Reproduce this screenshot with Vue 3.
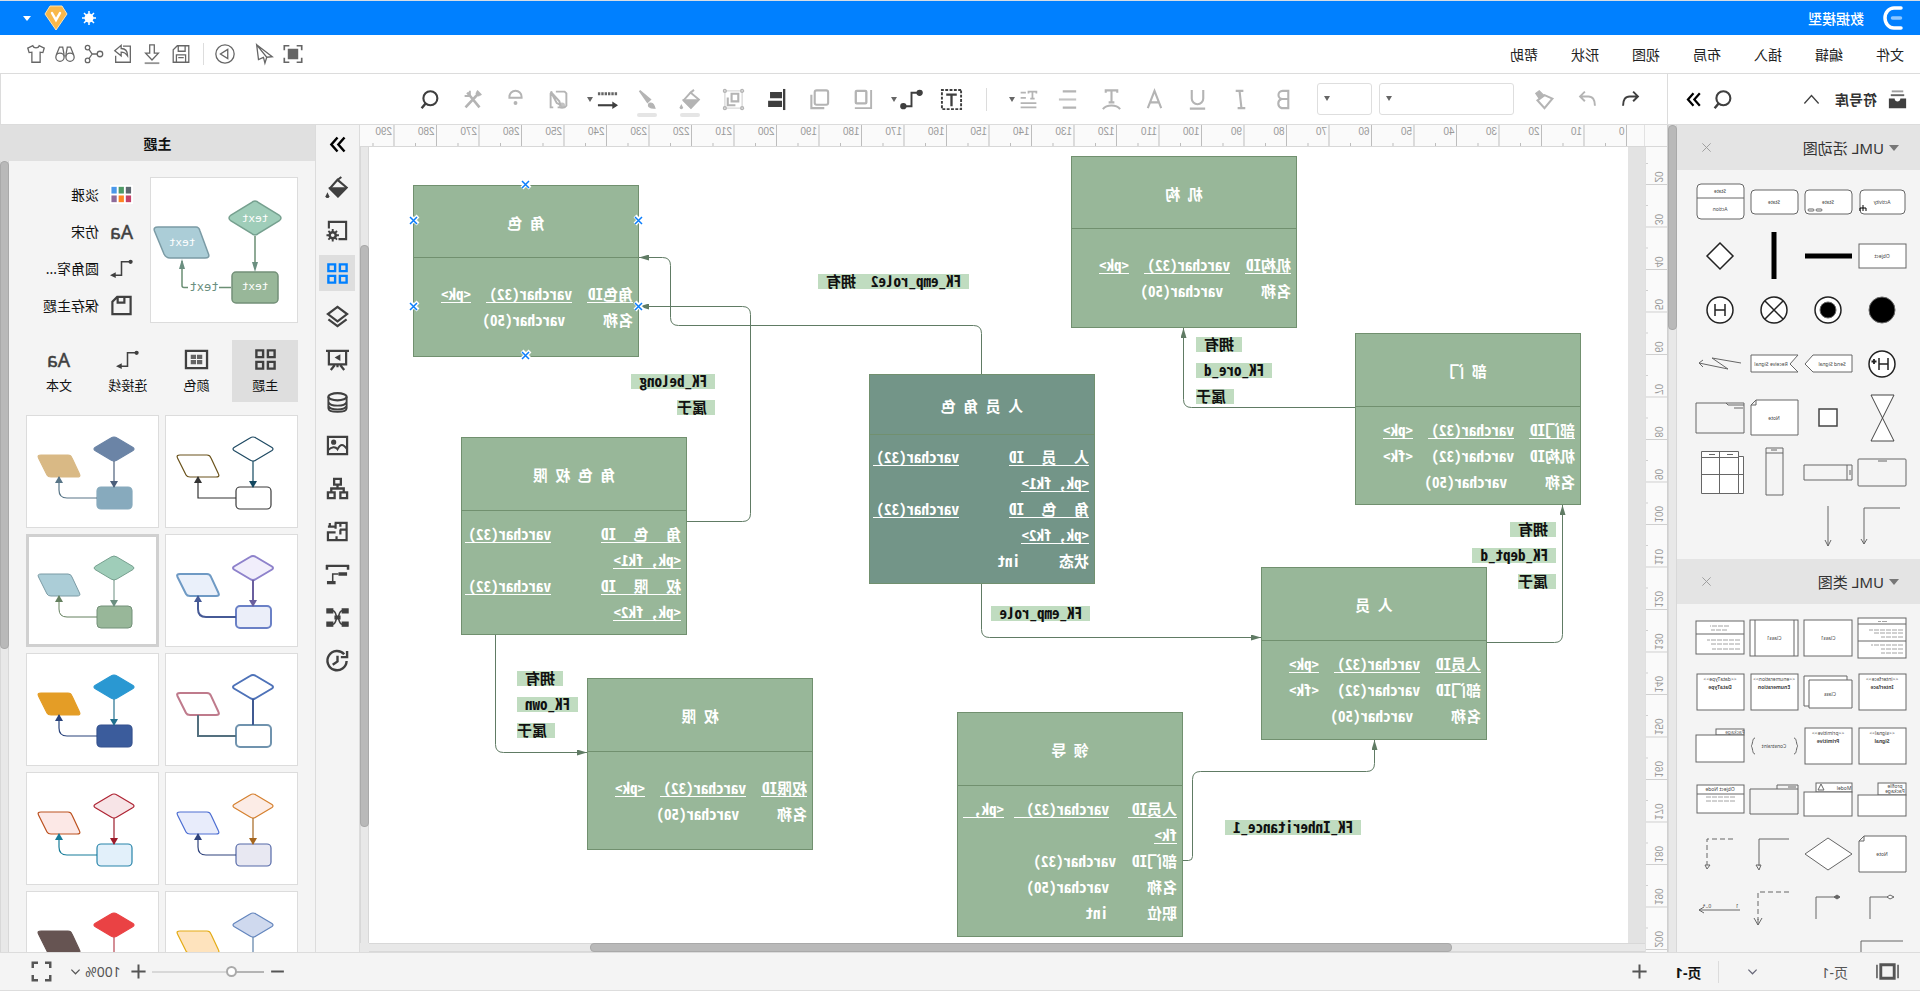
<script setup>
import { ref } from 'vue'

const menus = ['文件', '编辑', '插入', '布局', '视图', '形状', '帮助']

const icons = {
  undo: '<path d="M4 8.500h9c5 0 7.500 4 7.500 10.500M9 3 3.500 8.500 9 14" stroke-width="2.200"/>',
  redo: '<path d="M20 8.500H11C6 8.500 3.500 12.500 3.500 19M15 3l5.500 5.500L15 14" stroke-width="2.200"/>',
  shirt: '<path d="M8.500 3C9.500 6 14.500 6 15.500 3l5.500 2.500-1.500 5-3-.5v11h-9V10l-3 .5L3 5.500z"/>',
  glasses: '<circle cx="6.500" cy="15.500" r="4.500"/><circle cx="17.500" cy="15.500" r="4.500"/><path d="M11 14h2M2.500 13 6 4.500h3.500L11 13M21.500 13 18 4.500h-3.500L13 13"/>',
  share: '<circle cx="19" cy="5" r="2.500"/><circle cx="19" cy="19" r="2.500"/><circle cx="5.500" cy="12" r="3"/><path d="M8.500 12h5.500l3.500-5M14 12l3.500 5"/>',
  exportIc: '<path d="M12 3.500H4V21h16v-7"/><path d="M21 8.500 14 2.500v3.500C9 6 7 9 7 14c2-3 4-4 7-4v4z" fill="#fff"/>',
  download: '<path d="M9.500 2h5v9H19l-7 7.500L5 11h4.500z"/><path d="M4 22h16" stroke-width="2" opacity=".7"/>',
  save: '<path d="M3.500 3H16l4.500 4.500V21h-17zM7.500 3v6H15V3M7 21v-8h10v8M9 16h6"/>',
  play: '<circle cx="12" cy="12" r="10"/><path d="M9 7l8 5-8 5z"/>',
  send: '<path d="M20 2 3 15l6 .5L20 2 18 18l-6-2.500M9 15.500 11 22l1.500-6"/>',
  screen: '<path d="M2.500 8V3H8M16 3h5.500v5M21.500 16v5H16M8 21H2.500v-5" stroke-width="1.800"/><path d="M7 7h10v10H7z" fill="currentColor"/>',
  library: '<path d="M6 3.500h12" stroke-width="2" opacity=".5"/><path d="M5 7.500h14" stroke-width="2" opacity=".8"/><path d="M3 11h6c0 4 6 4 6 0h6v10H3z" fill="currentColor" stroke="none"/>',
  search: '<circle cx="11" cy="10.500" r="8" stroke-width="2.400"/><path d="M16.500 16.500 21 22" stroke-width="2.800"/>',
  dbl: '<path d="M4 4l7 8-7 8M12 4l7 8-7 8" stroke-width="2.800"/>',
  up: '<path d="M3 17l9-10 9 10" stroke-width="1.600"/>',
  down: '<path d="M3 8l9 9 9-9" stroke-width="2.600"/>',
  painter: '<path d="M3 11l9-4 8 6-8 9z" stroke-width="2.400"/><path d="M13 7l5-5 4 3-4 6z" fill="currentColor"/>',
  bold: '<path d="M7 3v18h7a5 5 0 0 0 0-9.500H7h6a4 4 0 0 0 0-8.500z" stroke-width="2.200"/>',
  italic: '<path d="M9 3h8M7 21h8M13 3l-2 18" stroke-width="2.200"/>',
  underline: '<path d="M6 2v9a6 6 0 0 0 12 0V2M4 21.500h16" stroke-width="2.200"/>',
  fontA: '<path d="M5 21 12 3l7 18M7.500 15h9" stroke-width="2.200"/>',
  textArc: '<path d="M6 5V2.500h12V5M12 3v12M9 15h6M3 22c4-5 14-5 18 0" stroke-width="2.200"/>',
  lines: '<path d="M4 3.500h14M4 20.500h14" stroke-width="2.200"/><path d="M4 12h18" stroke-width="2.200" opacity=".8"/>',
  textLines: '<path d="M3 5V3h9v2M7.500 3v8M5 11h5M15 4h6M15 10h6M3 16h18M3 21h18" stroke-width="2"/>',
  textBox: '<path d="M2 2h20v20H2z" stroke-width="2" stroke-dasharray="3 1.500"/><path d="M6.500 7h11M12 7v12" stroke-width="2.400"/>',
  conn: '<path d="M3 5h9v14h9" stroke-width="2"/><circle cx="3.500" cy="5" r="2.600" fill="currentColor"/><circle cx="20.500" cy="19" r="2.600" fill="currentColor"/>',
  alignTop: '<path d="M3 2v19h17" stroke-width="2"/><rect x="8" y="3" width="11" height="13" rx="1" stroke-width="2.400"/>',
  copy: '<rect x="3" y="2.500" width="14" height="15" rx="2" stroke-width="2.200"/><path d="M20.500 7v14H7" stroke-width="2.200"/>',
  alignLeft: '<path d="M4 1v22" stroke-width="2.400"/><path d="M7 5h11v5H7zM7 14h13v5H7z" fill="currentColor" stroke-width="1.500"/>',
  group: '<path d="M3 3h18v18H3z" opacity=".5"/><path d="M7 6h7v8H7zM18 10v8h-8" stroke-width="2.200"/><circle cx="3" cy="3" r="1.500"/><circle cx="21" cy="3" r="1.500"/><circle cx="3" cy="21" r="1.500"/><circle cx="21" cy="21" r="1.500"/>',
  bucket: '<path d="M2.500 12 12 4l8 9-8.500 8.500zM8 1l5 4" stroke-width="2.200"/><path d="M2.500 12.500h17.500l-8.500 9z" fill="currentColor"/><path d="M22.500 17l2 4a2 2 0 0 1-4 0z" fill="currentColor" stroke="none"/>',
  brush: '<path d="M21 2 12 15l-3-3z" fill="currentColor" stroke-width="2.200"/><path d="M8.500 16c2 0 3 2 2 4-2 2-5 2-7 2 1-2 1-6 5-6z" fill="currentColor"/>',
  dashes: '<path d="M2 6h20" stroke-width="3" stroke-dasharray="2.500 1" opacity=".8"/><path d="M22 18H3" stroke-width="2.200"/><path d="M7 14v8l-6-4z" fill="currentColor" stroke="none"/>',
  noEdit: '<path d="M15 3H5L3 5v14l2 2h8M19 3l2 2v16h-3M21 3 11 14l-1 4 4-2z" stroke-width="2.200"/><circle cx="8" cy="19" r="3.500" fill="currentColor" opacity=".8" stroke="none"/>',
  lamp: '<path d="M5 9a7 7 0 0 1 14 0v1H5z" stroke-width="2.200"/><circle cx="12" cy="16" r="2.200" fill="currentColor" stroke="none"/>',
  tools: '<path d="M6 6 20 21M18 4 4 21" stroke-width="3"/><path d="M2 7l5-5M4 8l4-4M15 2v6h6" stroke-width="2.200"/>',
  gearPage: '<path d="M11 21H3V3h18v7" stroke-width="2.200"/><circle cx="17" cy="17" r="3.200" stroke-width="2.600"/><path d="M17 10.500V14M17 20v3.500M10.500 17H14M20 17h3.500M12.500 12.500l2 2M21.500 12.500l-2 2M12.500 21.500l2-2M21.500 21.500l-2-2" stroke-width="2"/>',
  grid: '<path d="M2.500 2.500h7v7h-7zM14.500 2.500h7v7h-7zM2.500 14.500h7v7h-7zM14.500 14.500h7v7h-7z" stroke-width="2.500"/>',
  layers: '<path d="M12 2 2 9.500l10 7.500 10-7.500zM2.500 15 12 22l9.500-7" stroke-width="2.300"/>',
  present: '<path d="M0 3h24M3 3v14h18V3M9 18l-4 5M15 18l4 5M12 17v3" stroke-width="2.300"/><path d="M9 6.500v7l6-3.500z" fill="currentColor" stroke="none"/>',
  database: '<ellipse cx="12" cy="6" rx="9.500" ry="3.800" stroke-width="2.200"/><path d="M2.500 6v12c0 5 19 5 19 0V6M2.500 11.500c2 5 17 5 19 0M2.500 15.500c2 5 17 5 19 0" stroke-width="2"/>',
  picture: '<path d="M2 3h20v18H2z" stroke-width="2.300"/><circle cx="16" cy="8.500" r="2" fill="currentColor"/><path d="M2 16c4-6 7-6 10 0 2-3 6-3 10 1" stroke-width="2"/>',
  org: '<path d="M8.500 2h7v6h-7zM2 16h7v6H2zM15 16h7v6h-7zM12 8v4M5.500 16v-4h13v4" stroke-width="2.400"/>',
  floor: '<path d="M13 21H2.500V3H15M20 3v3M14 3v6M2.500 10h7M9 3v4M9 10v5M14 13h8v8h-9v-4M22 7h-8" stroke-width="2.300"/>',
  timeline: '<path d="M0 3h24M1 2v5M23 2v5" stroke-width="2.600"/><path d="M2 11.500h9M14 20.500h9" stroke-width="3.600"/><path d="M11 11.500h6v9" stroke-width="1.600"/>',
  mind: '<path d="M1 3h6v4H1zM17 3h6v4h-6zM1 17h6v4H1zM17 17h6v4h-6zM9.500 10.500h5v3h-5z" fill="currentColor"/><path d="M7 5c4 0 3 7 5 7s1-7 5-7M7 19c4 0 3-7 5-7s1 7 5 7" stroke-width="1.600"/>',
  history: '<path d="M2.500 12.500A10 10 0 1 0 5 5.500M2 2v6.500h6.500M12 7v6l5 3.500" stroke-width="2.500"/>',
  font: '<text x="12" y="20" font-size="20" text-anchor="middle" fill="currentColor" stroke="currentColor" stroke-width=".5">Aa</text>',
  step: '<path d="M2 5h10v14h7" stroke-width="1.600"/><circle cx="2.500" cy="5" r="2.200" fill="currentColor" stroke="none"/><path d="M18 16v6l6-3z" fill="currentColor" stroke="none"/>',
  palette: '<path d="M1 3h22v18H1z" stroke-width="2.400"/><path d="M6 7h5.500v4.500H6zM12.500 7H18v4.500h-5.500zM6 12.500h5.500V17H6zM12.500 12.500H18V17h-5.500z" fill="currentColor" stroke="none" opacity=".8"/>',
  swatch: '<path d="M0 2h24v20H0z" fill="#fff" stroke="none"/><g stroke="none"><path d="M2 4h5.500v7H2z" fill="#5d6870"/><path d="M9.500 4h5.500v7H9.500z" fill="#4f9a66"/><path d="M17 4h5.500v7H17z" fill="#4a98ea"/><path d="M2 13h5.500v7H2z" fill="#c4416a"/><path d="M9.500 13h5.500v7H9.500z" fill="#ff8522"/><path d="M17 13h5.500v7H17z" fill="#8e6b9a"/></g>',
  saveTheme: '<path d="M2.500 3h14l5 5v13h-19zM9 3v6h7V3" stroke-width="2.300"/>',
  full: '<path d="M2 8V2h6M16 2h6v6M22 16v6h-6M8 22H2v-6" stroke-width="2.800"/>',
  plus: '<path d="M12 2v20M2 12h20" stroke-width="2.800"/>',
  minus: '<path d="M3 12h18" stroke-width="2.800"/>',
  close: '<path d="M3 3l18 18M21 3 3 21" stroke-width="2"/>',
  pages: '<path d="M5 5h14v14H5z" stroke-width="3"/><path d="M1 5v14M23 5v14" stroke-width="1.600"/>',
}

const quick = [
  ['screen', '演示'], ['send', '发送'], ['play', '播放'], null,
  ['save', '保存'], ['download', '下载'], ['exportIc', '导出'], ['share', '分享'], ['glasses', '查找'], ['shirt', '外观'],
]
const textTools = [['bold', '加粗'], ['italic', '斜体'], ['underline', '下划线'], ['fontA', '字体颜色'], ['textArc', '文字效果'], ['lines', '对齐']]
const shapeTools = [
  ['alignTop', '对齐', 0], ['copy', '复制', 0], ['alignLeft', '左对齐', 1], ['group', '组合', 0],
  ['bucket', '填充', 0, 1], ['brush', '画笔', 0, 1],
]
const endTools = [['noEdit', '编辑', 0], ['lamp', '提示', 0], ['tools', '工具', 0], ['search', '搜索', 1]]
const rail = ['dbl', 'bucket', 'gearPage', 'grid', 'layers', 'present', 'database', 'picture', 'org', 'floor', 'timeline', 'mind', 'history']

const t = (x, y, s, extra = '') => `<text x="${x}" y="${y}" font-size="5" text-anchor="middle" fill="#444" stroke="none" ${extra}>${s}</text>`
const box = (x, y, w, h, r = 0) => `<rect x="${x}" y="${y}" width="${w}" height="${h}" rx="${r}" fill="#fff"/>`

const activity = [
  box(4, 15, 45, 24, 4) + t(27, 29, 'Activity') + '<path d="M46 30v6M43 36v-3h6v3" stroke="#000"/>',
  box(3, 15, 47, 24, 4) + t(27, 29, 'State') + '<rect x="33" y="34" width="6" height="2" rx="1"/><rect x="41" y="34" width="6" height="2" rx="1"/>',
  box(3, 15, 47, 24, 4) + t(27, 29, 'State'),
  box(3, 9, 47, 35, 4) + '<path d="M3 23h47"/>' + t(27, 18, 'State') + t(27, 36, 'Action'),
  box(3, 15, 47, 24) + t(27, 29, 'Object'),
  '<path d="M3 27h47" stroke="#000" stroke-width="5"/>',
  '<path d="M27 3v47" stroke="#000" stroke-width="5"/>',
  '<path d="M27 14 40 27 27 40 14 27z" fill="#fff" stroke="#222" stroke-width="1.500"/>',
  '<circle cx="27" cy="27" r="13" fill="#000"/>',
  '<circle cx="27" cy="27" r="13" fill="#fff" stroke="#222" stroke-width="1.500"/><circle cx="27" cy="27" r="8" fill="#000"/>',
  '<circle cx="27" cy="27" r="13" fill="#fff" stroke="#222" stroke-width="1.500"/><path d="M18 18l18 18M36 18 18 36" stroke="#222" stroke-width="1.500"/>',
  '<circle cx="27" cy="27" r="13" fill="#fff" stroke="#222" stroke-width="1.500"/><path d="M22 21v12M32 21v12M22 27h10" stroke="#222" stroke-width="1.500"/>',
  '<circle cx="27" cy="27" r="13" fill="#fff" stroke="#222" stroke-width="1.500"/><path d="M21 21v12M30 21v12M21 27h9" stroke="#222" stroke-width="1.500"/><path d="M35 22v5M32.500 24.500h5" stroke="#222" stroke-width="1.800"/>',
  '<path d="M3 18h39l8 9-8 8H3z" fill="#fff"/>' + t(23, 29, 'Send Signal'),
  '<path d="M3 18h47v17H3l8-8z" fill="#fff"/>' + t(30, 29, 'Receive Signal'),
  '<path d="M6 26 35 21 19 32 48 26M44 23l4 3-4 4"/>',
  '<path d="M15 4h23L15 50h23z" fill="#fff" stroke="#444"/>',
  '<rect x="18" y="18" width="18" height="17" fill="#fff" stroke="#444" stroke-width="1.500"/>',
  '<path d="M3 9h42l5 5v30H3zM45 9v5h5" fill="#fff"/>' + t(27, 29, 'Note'),
  '<path d="M3 12h48v30H3zM3 14h16l2-2M4 17h9"/>',
  '<rect x="3" y="14" width="48" height="27" rx="1"/><path d="M22 16h9"/>',
  '<path d="M3 20h48v15H3zM8 20v15M5 25v5"/>',
  '<path d="M18 3h17v47H18zM18 8h17M24 5h6"/>',
  '<path d="M8.500 6.500h37v42h-37z" fill="#fff"/><path d="M3.500 11.500h5v37h-5z" fill="#fff"/><path d="M8.500 12.500h37M27.500 6.500v42M3.500 29.500h42M14 9.500h6M32 9.500h6" />',
  '<path d="M9 9h36v36M42 40l3 5 3-5"/>',
  '<path d="M27 7v40M24 41l3 6 3-6"/>',
]
const tag = (a, b) => box(3, 9, 47, 36) + t(27, 16, a) + t(27, 24, b, 'font-weight="700"')
const classes = [
  box(3, 7, 48, 40) + '<path d="M3 13h48M3 30h48"/><path d="M22 10.500h9M6 19h34M6 22h30M6 26h22M6 34h32M6 38h22M6 42h22" stroke-dasharray="5 1" opacity=".6"/>',
  box(3, 9, 48, 36) + t(27, 29, 'Class1'),
  box(3, 9, 48, 36) + '<path d="M7 9v36M46 9v36"/>' + t(27, 29, 'Class1'),
  box(3, 10, 48, 33) + '<path d="M3 23h48"/><path d="M18 15h19M20 19h16M7 29h33M7 33h30M7 38h28" stroke-dasharray="5 1" opacity=".6"/>',
  tag('&lt;&lt;interface&gt;&gt;', 'Interface'),
  '<path d="M8 11h43v30H8z" fill="#fff"/><path d="M3 15h43v28H3z" fill="#fff"/>' + t(25, 31, 'Class'),
  tag('&lt;&lt;enumeration&gt;&gt;', 'Enumeration'),
  tag('&lt;&lt;dataType&gt;&gt;', 'DataType'),
  tag('&lt;&lt;signal&gt;&gt;', 'Signal'),
  tag('&lt;&lt;primitive&gt;&gt;', 'Primitive'),
  '<path d="M7 19c-3 0-2 7-4 8 2 1 1 8 4 8M46 19c3 0 2 7 4 8-2 1-1 8-4 8"/>' + t(27, 29, 'Constraint'),
  box(3, 10, 28, 6) + box(3, 16, 48, 27) + t(12, 15, 'Package', 'opacity=".8"'),
  box(3, 10, 28, 12) + box(3, 22, 48, 21) + t(14, 15, 'profile') + t(14, 20, 'Package'),
  box(3, 10, 36, 9) + box(3, 19, 48, 24) + t(11, 17, 'Model') + '<path d="M31 17h6l-3-6z"/>',
  '<path d="M3 12h21v4M3 12v29h48V16H3M5 14h8"/>',
  box(3, 12, 47, 28) + '<path d="M3 21h47"/>' + t(27, 18, 'Object Node') + '<path d="M12 24h30M12 28h30" stroke-dasharray="5 1" opacity=".6"/>',
  '<path d="M3 9h42l5 5v31H3zM45 9v5h5" fill="#fff"/>' + t(27, 29, 'Note'),
  '<path d="M27 11 50 27 27 43 3 27z" fill="#fff"/>',
  '<path d="M12 12h30v27M40 38h5l-3 5z"/>',
  '<path d="M14 12h26v26" stroke-dasharray="5 3"/><path d="M37 38h5l-2 4z"/>',
  '<path d="M16 16h23v22"/><path d="M15 16l4-2 3 2-3 2z" fill="#fff"/>',
  '<path d="M16 16h23v22"/><path d="M15 16l3-2 3 2-3 2z" fill="#666"/>',
  '<path d="M12 11h31v28" stroke-dasharray="5 3"/><path d="M39 37l4 7 4-7M43 38v6"/>',
  '<path d="M7 29h41M43 26l5 3-5 3"/>' + t(10, 27, '1') + t(40, 27, '0..*'),
  '<path d="M6 6h42v20"/>',
]
const libs = [
  { title: 'UML 活动图', items: activity },
  { title: 'UML 类图', items: classes },
]

const hTicks = Array.from({ length: 31 }, (_, i) => ({ v: i * 10, p: 40.5 + i * 42.5 }))
const vTicks = Array.from({ length: 19 }, (_, i) => ({ v: (i + 2) * 10, p: 37.5 + i * 42.5 }))

const V32 = 'varchar(32)'
const V50 = 'varchar(50)'
const idRow = (n, u, k) => ({ u, s: [{ t: n, w: 46 }, { t: V32, w: 86 }, { t: k }] })
const nameRow = { s: [{ t: '名称', w: 53 }, { t: V50 }] }
const wide = n => ({ u: 1, s: [{ t: n, w: 80, j: 1, m: 35 }, { t: V32, w: 86 }] })
const line = k => ({ u: 1, s: [{ t: k }] })
const intRow = n => ({ s: [{ t: n, w: 54 }, { t: 'int' }] })

const entities = [
  { x: 989, y: 38, h: 172, d: 72, title: '角 色', rows: [idRow('角色ID', 1, '<pk>'), nameRow] },
  { x: 331, y: 9, h: 172, d: 72, title: '机 构', rows: [idRow('机构ID', 1, '<pk>'), nameRow] },
  { x: 533, y: 227, h: 210, d: 60, dark: 1, title: '人 员 角 色', rows: [wide('人 员 ID'), line('<pk, fk1>'), wide('角 色 ID'), line('<pk, fk2>'), intRow('状态')] },
  { x: 47, y: 186, h: 172, d: 73, title: '部 门', rows: [idRow('部门ID', 1, '<pk>'), idRow('机构ID', 0, '<fk>'), nameRow] },
  { x: 941, y: 290, h: 198, d: 73, title: '角 色 权 限', rows: [wide('角 色 ID'), line('<pk, fk1>'), wide('权 限 ID'), line('<pk, fk2>')] },
  { x: 815, y: 531, h: 172, d: 73, title: '权 限', rows: [idRow('权限ID', 1, '<pk>'), nameRow] },
  { x: 141, y: 420, h: 173, d: 73, title: '人 员', rows: [idRow('人员ID', 1, '<pk>'), idRow('部门ID', 0, '<fk>'), nameRow] },
  { x: 445, y: 565, h: 225, d: 73, title: '领 导', rows: [
    { u: 1, s: [{ t: '人员ID', w: 49, m: 4 }, { t: V32, w: 95, m: -5 }, { t: '<pk,', w: 41 }] },
    line('fk>'), { s: [{ t: '部门ID', w: 46 }, { t: V32 }] }, nameRow, intRow('职位')] },
]
const labels = [
  { x: 659, y: 121, l: ['FK_emp_role2  拥有'] },
  { x: 356, y: 184, l: ['拥有', 'FK_ore_d', '属于'], end: 1 },
  { x: 72, y: 369, l: ['拥有', 'FK_dept_d', '属于'] },
  { x: 913, y: 221, l: ['FK_belong', '属于'] },
  { x: 1050, y: 518, l: ['拥有', 'FK_own', '属于'], end: 1 },
  { x: 538, y: 453, l: ['FK_emp_role'] },
  { x: 267, y: 667, l: ['FK_Inheritance_1'] },
]
const links = [
  'M646.500 227V186.500Q646.500 178.500 654.500 178.500H949.500Q957.500 178.500 957.500 170.500V118.500Q957.500 110.500 965.500 110.500H989',
  'M941 374.500H885.500Q877.500 374.500 877.500 366.500V167.500Q877.500 159.500 885.500 159.500H989',
  'M273 260.500H436.500Q444.500 260.500 444.500 252.500V181',
  'M141 495.500H73.500Q65.500 495.500 65.500 487.500V358',
  'M646.500 437V482.500Q646.500 490.500 638.500 490.500H367',
  'M1132.500 488V597.500Q1132.500 605.500 1124.500 605.500H1041',
  'M445 713.500H439.500Q435.500 713.500 435.500 709.500V632.500Q435.500 624.500 427.500 624.500H261.500Q253.500 624.500 253.500 616.500V593',
]
const marks = [[1102, 37], [1214, 73], [989, 73], [1214, 159], [989, 159], [1102, 208]]

const themes = [
  { d: ['#fff', '#1f4a63'], p: ['#fff', '#6b531c'], b: ['#fff', '#3a3a3a'], l: ['#12475f', '#333'], w: 1.2, sq: 1 },
  { d: ['#6b84a6', '#6b84a6'], p: ['#d9b985', '#d9b985'], b: ['#87aabd', '#87aabd'], l: ['#4b5f7b', '#587587'], w: 1.2 },
  { d: ['#f1eefb', '#8e82cb'], p: ['#eaf0fa', '#6f9ac4'], b: ['#ebeef9', '#6a80c6'], l: ['#6a5f9f', '#465a96'], w: 2 },
  { d: ['#9fcdb9', '#76a08f'], p: ['#abcdd7', '#7b9ba5'], b: ['#98b799', '#739078'], l: ['#6b8f80', '#64805f'], w: 1, on: 1 },
  { d: ['#fff', '#4e72b8'], p: ['#fff', '#bf7b8c'], b: ['#fff', '#7093ae'], l: ['#405a92', '#54707f'], w: 2, sq: 1, no: 1 },
  { d: ['#2a98d2', '#2a98d2'], p: ['#e49d26', '#e49d26'], b: ['#3b5c9c', '#35518e'], l: ['#20708f', '#29437b'], w: 1.2 },
  { d: ['#fcece6', '#d5802f'], p: ['#e8ecfb', '#4e6fd2'], b: ['#e8e8f2', '#5569a8'], l: ['#a5661f', '#2f437c'], w: 1.2 },
  { d: ['#f7e4e7', '#ae2433'], p: ['#fce8e6', '#bc5220'], b: ['#e2f0fa', '#2784a9'], l: ['#9c1b2a', '#177c99'], w: 1.2 },
  { d: ['#cfd9ee', '#6385bd'], p: ['#fee3bd', '#e4ac17'], b: ['#dde6f5', '#6385bd'], l: ['#5b7fa7', '#5b7fa7'], w: 1.2 },
  { d: ['#ea4244', '#ea4244'], p: ['#665452', '#665452'], b: ['#777', '#777'], l: ['#b84350', '#555'], w: 1.2 },
]
const options = [['swatch', '淡雅'], ['font', '仿宋'], ['step', '圆角窄...'], ['saveTheme', '保存主题']]
const tabs = [['grid', '主题'], ['palette', '颜色'], ['step', '连接线'], ['font', '文本']]
const zoom = ref(26)
</script>

<template>
  <div class="app">
    <header class="title">
      <svg class="logo" viewBox="0 0 22 24"><path d="M2 2h7a9 10 0 0 1 0 20H2" fill="none" stroke="#fff" stroke-width="3.500" stroke-linecap="round" /><path d="M2.500 12h8" stroke="#8cc6ff" stroke-width="3.500" stroke-linecap="round" /></svg>
      <h1>数据模型</h1>
      <div class="account">
        <svg width="16" height="16" viewBox="0 0 16 16"><circle cx="8" cy="8" r="4.500" fill="#fff" /><path d="M8 1v14M1 8h14M3 3l10 10M13 3 3 13" stroke="#fff" stroke-width="1.500" /></svg>
        <svg width="24" height="26" viewBox="0 0 24 26"><path d="M6 1h12l5 8-11 16L1 9z" fill="#f9b84a" stroke="#ffe3ae" /><path d="M8 8l4 7 4-7" fill="none" stroke="#fff" stroke-width="2.500" stroke-linecap="round" /></svg>
        <svg width="8" height="5" viewBox="0 0 8 5"><path d="M0 0h8L4 5z" fill="#fff" /></svg>
      </div>
    </header>

    <nav class="menu">
      <button v-for="m in menus" :key="m" class="menu-item">{{ m }}</button>
      <div class="quick">
        <template v-for="(q, i) in quick" :key="i">
          <button v-if="q" class="q" :class="{ apart: i === 2 }" :aria-label="q[1]"><svg viewBox="0 0 24 24" class="ic" v-html="icons[q[0]]"></svg></button>
          <i v-else class="qsep"></i>
        </template>
      </div>
    </nav>

    <div class="tools">
      <div class="lib-bar">
        <svg viewBox="0 0 24 24" class="ic i23 dark" v-html="icons.library"></svg>
        <strong>符号库</strong>
        <svg viewBox="0 0 24 24" class="ic i19 dark" v-html="icons.up"></svg>
        <button class="plain push" aria-label="查找符号"><svg viewBox="0 0 24 24" class="ic i21 dark" v-html="icons.search"></svg></button>
        <button class="plain" aria-label="折叠"><svg viewBox="0 0 24 24" class="ic i19 blk" v-html="icons.dbl"></svg></button>
      </div>
      <div class="bar">
        <button class="tb dark" aria-label="撤销"><svg viewBox="0 0 24 24" class="ic i21" v-html="icons.undo"></svg></button>
        <button class="tb" aria-label="重做"><svg viewBox="0 0 24 24" class="ic i21" v-html="icons.redo"></svg></button>
        <button class="tb" aria-label="格式刷"><svg viewBox="0 0 24 24" class="ic i21" v-html="icons.painter"></svg></button>
        <span class="pick font"><select aria-label="字体"><option></option></select><i class="caret"></i></span>
        <span class="pick size"><select aria-label="字号"><option></option></select><i class="caret"></i></span>
        <button v-for="b in textTools" :key="b[0]" class="tb" :aria-label="b[1]"><svg viewBox="0 0 24 24" class="ic i23" v-html="icons[b[0]]"></svg></button>
        <button class="tb drop" aria-label="段落"><svg viewBox="0 0 24 24" class="ic i21" v-html="icons.textLines"></svg><i class="caret"></i></button>
        <i class="sep"></i>
        <button class="tb dark" aria-label="文本框"><svg viewBox="0 0 24 24" class="ic i23" v-html="icons.textBox"></svg></button>
        <button class="tb drop dark" aria-label="连接线"><svg viewBox="0 0 24 24" class="ic i23" v-html="icons.conn"></svg><i class="caret"></i></button>
        <button v-for="b in shapeTools" :key="b[0]" class="tb" :class="{ dark: b[2], swatch: b[3] }" :aria-label="b[1]"><svg viewBox="0 0 24 24" class="ic" :class="b[3] ? 'i21' : 'i23'" v-html="icons[b[0]]"></svg></button>
        <button class="tb drop dark" aria-label="线型"><svg viewBox="0 0 24 24" class="ic i23" v-html="icons.dashes"></svg><i class="caret"></i></button>
        <button v-for="b in endTools" :key="b[0]" class="tb" :class="{ dark: b[2] }" :aria-label="b[1]"><svg viewBox="0 0 24 24" class="ic i21" v-html="icons[b[0]]"></svg></button>
      </div>
    </div>

    <main class="main">
      <aside class="lib">
        <div class="lib-list">
          <section v-for="(l, n) in libs" :key="l.title" class="lib-sec">
            <h2><i class="tri"></i>{{ l.title }}<button class="plain push" aria-label="关闭"><svg viewBox="0 0 24 24" class="ic i11" v-html="icons.close"></svg></button></h2>
            <div class="cells" :class="{ second: n }">
              <button v-for="(s, i) in l.items" :key="i" class="cell" :aria-label="'形状 ' + (i + 1)"><svg viewBox="0 0 54 54" v-html="s"></svg></button>
            </div>
          </section>
        </div>
        <div class="sb"><i class="thumb lib-thumb"></i></div>
      </aside>

      <section class="work">
        <div class="hruler">
          <svg width="100%" height="21">
            <path d="M22.500 0v21" stroke="#e2e2e2" />
            <g v-for="k in hTicks" :key="k.v">
              <path :d="`M${k.p} 0v21M${k.p + 21} 18v3`" stroke="#bdbdbd" />
              <text :x="k.p + 2" y="10">{{ k.v }}</text>
            </g>
          </svg>
        </div>
        <div class="vruler">
          <svg width="22" height="100%">
            <path d="M19 16.500h3" stroke="#cfcfcf" />
            <g v-for="k in vTicks" :key="k.v">
              <path :d="`M0 ${k.p}h22M19 ${k.p + 21}h3`" stroke="#cfcfcf" />
              <text :transform="`translate(12 ${k.p - 2}) rotate(-90)`">{{ k.v }}</text>
            </g>
          </svg>
        </div>
        <div class="canvas">
          <div class="paper">
            <svg class="links" width="1" height="1">
              <defs><marker id="arrow" viewBox="0 0 10 6" refX="10" refY="3" markerWidth="10" markerHeight="6" orient="auto" markerUnits="userSpaceOnUse"><path d="M0 0 10 3 0 6z" fill="#607b64" /></marker></defs>
              <path v-for="d in links" :key="d" :d="d" marker-end="url(#arrow)" />
            </svg>
            <article v-for="e in entities" :key="e.title" class="entity" :class="{ deep: e.dark }" :style="{ left: e.x + 'px', top: e.y + 'px', height: e.h + 'px' }">
              <h3 :style="{ height: e.d + 'px' }">{{ e.title }}</h3>
              <div class="rows">
                <p v-for="(r, i) in e.rows" :key="i" :class="{ key: r.u }">
                  <span v-for="(s, j) in r.s" :key="j" :class="{ spread: s.j }" :style="{ minWidth: (s.w || 0) + 'px', marginRight: (s.m || 0) + 'px' }">{{ s.t }}</span>
                </p>
              </div>
            </article>
            <div v-for="(l, n) in labels" :key="n" class="label" :class="{ end: l.end }" :style="{ left: l.x + 'px', top: l.y + 'px' }">
              <p v-for="s in l.l" :key="s"><span :class="{ trim: s === '属于' }">{{ s }}</span></p>
            </div>
            <svg class="links" width="1" height="1">
              <g v-for="(m, i) in marks" :key="i" :transform="`translate(${m[0]} ${m[1]})`">
                <path d="M-4-4 4 4M4-4-4 4" stroke="#fff" stroke-width="4" /><path d="M-3-3 4 4M4-3-3 4" stroke="#0a7dfb" stroke-width="1.500" />
              </g>
            </svg>
          </div>
        </div>
        <div class="sb vs"><i class="thumb v-thumb"></i></div>
        <div class="sb hs"><i class="thumb h-thumb"></i></div>
        <div class="corner"></div>
      </section>

      <nav class="rail">
        <button v-for="(r, i) in rail" :key="r" :class="{ on: r === 'grid', blk: !i }" :aria-label="'面板 ' + (i + 1)"><svg viewBox="0 0 24 24" class="ic" :class="i ? 'i23' : 'i21'" v-html="icons[r]"></svg></button>
      </nav>

      <aside class="panel">
        <h2>主题</h2>
        <div class="panel-row">
          <div class="panel-body">
            <div class="current">
              <svg class="preview" viewBox="0 0 148 146">
                <path d="M39 26Q43 22 47 26L67 38Q71 41 67 44L47 56Q43 60 39 56L19 44Q15 41 19 38Z" fill="#9fcdb9" stroke="#76a08f" stroke-width="1.500" />
                <path d="M102 50H140Q145 50 143.500 54L134 77Q132 81 128 81H93Q88 81 89.500 77L98 54Q99 50 102 50Z" fill="#abcdd7" stroke="#7b9ba5" stroke-width="1.500" />
                <rect x="20" y="95" width="46" height="31" rx="4" fill="#98b799" stroke="#739078" stroke-width="1.500" />
                <path d="M43 59V92M67 110.500H79M110 110.500H114Q116 110.500 116 108.500V84" fill="none" stroke="#6b8f74" stroke-width="1.500" />
                <path d="M40 85h6l-3 10zM113 92h6l-3-10z" fill="#6b8f80" />
                <text x="43" y="45">text</text><text x="116" y="69">text</text><text x="43" y="113">text</text>
                <text x="94" y="114" class="mid">text</text>
              </svg>
              <div class="opts">
                <button v-for="o in options" :key="o[1]"><svg viewBox="0 0 24 24" class="ic i23" v-html="icons[o[0]]"></svg>{{ o[1] }}</button>
              </div>
            </div>
            <div class="tabs">
              <button v-for="(b, i) in tabs" :key="b[1]" :class="{ on: !i }"><svg viewBox="0 0 24 24" class="ic i23" v-html="icons[b[0]]"></svg>{{ b[1] }}</button>
            </div>
            <div class="cards">
              <button v-for="(c, i) in themes" :key="i" class="card" :class="{ sel: c.on }" :aria-label="'主题 ' + (i + 1)">
                <svg viewBox="0 0 133 113">
                  <path d="M42 23Q45 21 48 23L64 32.500Q66 34 64 35.500L48 45Q45 47 42 45L26 35.500Q24 34 26 32.500Z" :fill="c.d[0]" :stroke="c.d[1]" :stroke-width="c.w" />
                  <path d="M91 40H118Q122 40 120.500 43L112 60Q111 62 108 62H82Q78 62 79.500 59L87 43Q88 40 91 40Z" :fill="c.p[0]" :stroke="c.p[1]" :stroke-width="c.w" />
                  <rect x="27" y="72" width="35" height="22" rx="4" :fill="c.b[0]" :stroke="c.b[1]" :stroke-width="c.w" />
                  <path d="M45 46V72" :stroke="c.l[0]" :stroke-width="c.w" />
                  <path :d="c.sq ? 'M62 83H100V62' : 'M62 83H92Q100 83 100 75V62'" fill="none" :stroke="c.l[1]" :stroke-width="c.w" />
                  <template v-if="!c.no"><path d="M41 66h8l-4 7z" :fill="c.l[0]" /><path d="M96 68h8l-4-7z" :fill="c.l[1]" /></template>
                </svg>
              </button>
            </div>
          </div>
          <div class="sb"><i class="thumb p-thumb"></i></div>
        </div>
      </aside>
    </main>

    <footer class="foot">
      <button class="plain" aria-label="页面列表"><svg viewBox="0 0 24 24" class="ic i23" v-html="icons.pages"></svg></button>
      <button class="plain f-page">页-1<svg viewBox="0 0 24 24" class="ic i11" v-html="icons.down"></svg></button>
      <button class="plain f-tab">页-1</button>
      <button class="plain" aria-label="新建页"><svg viewBox="0 0 24 24" class="ic i17" v-html="icons.plus"></svg></button>
      <div class="zoom">
        <button class="plain" aria-label="缩小"><svg viewBox="0 0 24 24" class="ic i17" v-html="icons.minus"></svg></button>
        <input v-model="zoom" type="range" min="0" max="100" aria-label="缩放">
        <button class="plain" aria-label="放大"><svg viewBox="0 0 24 24" class="ic i17" v-html="icons.plus"></svg></button>
        <button class="plain pct">100%<svg viewBox="0 0 24 24" class="ic i11" v-html="icons.down"></svg></button>
        <button class="plain" aria-label="全屏"><svg viewBox="0 0 24 24" class="ic i21" v-html="icons.full"></svg></button>
      </div>
    </footer>
  </div>
</template>

<style>
html, body { margin: 0; background: #f4f4f4; }
</style>

<style scoped>
.app { display: flex; flex-direction: column; height: 100vh; overflow: hidden; transform: scaleX(-1); font-family: "Noto Sans", "Noto Sans CJK SC", sans-serif; font-size: 14px; color: #222; background: #f4f4f4; box-sizing: border-box; border-top: 1px solid #d6dde5; border-bottom: 1px solid #ddd; }
.app * { box-sizing: border-box; }
button { border: 0; padding: 0; background: none; font: inherit; color: inherit; cursor: pointer; display: flex; align-items: center; justify-content: center; }
h1, h2, h3, p { margin: 0; font-weight: 400; }
i { display: block; }
.ic { width: 22px; height: 22px; fill: none; stroke: currentColor; stroke-width: 1.4; flex: none; overflow: visible; }
.i11 { width: 11px; height: 11px; }
.i17 { width: 17px; height: 17px; }
.i19 { width: 19px; height: 19px; }
.i21 { width: 21px; height: 21px; }
.i23 { width: 23px; height: 23px; }
.dark { color: #3f3f3f; }
.blk { color: #000; }
.push { margin-left: auto; }

.title { display: flex; align-items: center; flex: none; height: 34px; padding: 0 23px 0 17px; background: #0080ff; }
.logo { width: 22px; height: 24px; }
.title h1 { margin-left: 17px; font-size: 14px; font-weight: 500; color: #fff; }
.account { display: flex; align-items: center; gap: 13px; margin-left: auto; }

.menu { display: flex; align-items: center; flex: none; height: 39px; padding: 0 22px 0 16px; background: #fff; border-bottom: 1px solid #dcdcdc; }
.menu-item { margin-right: 33px; color: #222; }
.quick { display: flex; align-items: center; margin-left: auto; color: #666; }
.q { width: 29px; height: 28px; }
.q.apart { margin-left: 10px; }
.qsep { width: 1px; height: 22px; margin: 0 7px; background: #ddd; }

.tools { display: flex; flex: none; height: 51px; background: #fff; border-bottom: 1px solid #dcdcdc; }
.lib-bar { display: flex; align-items: center; flex: none; width: 253px; padding: 0 16px 0 11px; border-right: 1px solid #dcdcdc; }
.lib-bar strong { margin: 0 14px 0 9px; font-weight: 700; color: #333; }
.lib-bar .plain + .plain { margin-left: 9px; }
.bar { display: flex; align-items: center; flex: 1; padding-left: 15px; border-right: 1px solid #dcdcdc; color: #b4b4b4; }
.tb { width: 43px; height: 40px; flex: none; position: relative; }
.drop { width: 46px; gap: 3px; }
.caret { width: 0; height: 0; border: 3px solid transparent; border-top: 5px solid #666; border-bottom: 0; }
.sep { width: 1px; height: 23px; margin: 0 13px 0 14px; background: #dcdcdc; }
.swatch::after { content: ""; position: absolute; left: 12px; bottom: 2px; width: 20px; height: 4px; border-radius: 2px; background: #e5e5e5; }
.pick { position: relative; flex: none; height: 32px; }
.pick select { width: 100%; height: 100%; appearance: none; border: 1px solid #dedede; border-radius: 3px; background: #fff; }
.pick .caret { position: absolute; right: 7px; top: 13px; }
.font { width: 135px; margin: 0 7px 0 9px; }
.size { width: 55px; margin-right: 12px; }

.main { display: flex; flex: 1; min-height: 0; }
.sb { flex: none; width: 9px; background: #e8e8e8; border: 1px solid #d8d8d8; border-width: 0 1px; }
.thumb { background: #b9b9b9; border-radius: 4px; margin: 0 -1px; border: 1px solid #a9a9a9; }
.lib { display: flex; flex: none; width: 252px; overflow: hidden; }
.lib-list { flex: 1; overflow: hidden; }
.lib-thumb { height: 205px; }
.lib h2 { display: flex; align-items: center; height: 45px; padding: 0 24px 0 21px; background: #e4e4e4; font-size: 15px; color: #333; }
.lib h2 .ic { color: #999; }
.tri { margin-right: 5px; border: 5px solid transparent; border-top: 6px solid #777; border-bottom: 0; }
.cells { display: grid; grid-template-columns: repeat(4, 54px); padding: 5px 11px 6px; }
.cells.second { padding-top: 7px; }
.cell { height: 54px; }
.cell svg { width: 54px; height: 54px; fill: none; stroke: #666; }

.work { display: grid; grid-template-columns: 22px 1fr 9px; grid-template-rows: 22px 1fr 9px; flex: 1; min-width: 0; border-left: 1px solid #d0d0d0; }
.hruler { grid-column: 1 / -1; height: 22px; overflow: hidden; background: #fafafa; border-bottom: 1px solid #d8d8d8; }
.hruler svg, .vruler svg { display: block; }
.hruler text, .vruler text { font-family: "Liberation Sans", sans-serif; font-size: 10px; fill: #999; }
.vruler { grid-row: 2 / 4; overflow: hidden; background: #fafafa; border-right: 1px solid #e0e0e0; }
.canvas { display: flex; min-width: 0; min-height: 0; overflow: hidden; padding-left: 17px; background: #e3e3e3; }
.paper { position: relative; flex: 1; background: #fff; }
.vs { padding-top: 98px; }
.v-thumb { height: 582px; }
.hs { width: auto; border-width: 1px 0; padding-left: 193px; }
.h-thumb { width: 862px; height: 9px; margin: -1px 0; }
.corner { background: #e8e8e8; }

.links { position: absolute; left: 0; top: 0; overflow: visible; fill: none; stroke: #607b64; }
.links marker path { stroke: none; }
.entity { position: absolute; width: 226px; display: flex; flex-direction: column; background: #98b799; border: 1px solid #71906f; color: #fff; font: 700 15px/26px "Noto Sans CJK SC", sans-serif; font-feature-settings: "hwid"; }
.entity.deep { background: #739588; }
.entity h3 { display: flex; align-items: center; justify-content: center; flex: none; padding-top: 2px; border-bottom: 1px solid #71906f; font-size: 15px; font-weight: 700; white-space: pre; }
.rows { display: flex; flex-direction: column; justify-content: center; flex: 1; padding-left: 5px; }
.rows p { display: flex; align-items: center; gap: 15px; height: 26px; font-weight: 700; white-space: pre; }
.rows span { height: 18px; line-height: 18px; border-bottom: 1px solid transparent; }
.rows .key span { border-bottom-color: #fff; }
.rows .spread { width: 80px; white-space: normal; text-align: justify; text-align-last: justify; }
.label { position: absolute; color: #111; font: 700 15px/26px "Noto Sans CJK SC", sans-serif; font-feature-settings: "hwid"; }
.label.end { text-align: right; }
.label p { display: flex; align-items: center; height: 26px; font-weight: 700; white-space: pre; }
.label.end p { justify-content: flex-end; }
.label span { height: 15px; line-height: 14px; padding: 0 8px; background: #c0dcc0; }
.label .trim { padding-right: 0; }

.rail { display: flex; flex-direction: column; align-items: center; gap: 7px; flex: none; width: 45px; padding-top: 1px; border-left: 1px solid #dcdcdc; border-right: 1px solid #dcdcdc; color: #404040; }
.rail button { width: 36px; height: 36px; }
.rail .on { background: #dedede; color: #0080ff; }
.rail .blk { color: #000; }

.panel { display: flex; flex-direction: column; flex: none; width: 315px; min-height: 0; }
.panel h2 { display: flex; align-items: center; justify-content: center; flex: none; height: 36px; background: #e0e0e0; font-size: 14px; font-weight: 700; color: #111; }
.panel-row { display: flex; flex: 1; min-height: 0; }
.panel-body { flex: 1; overflow: hidden; padding: 16px 17px 0; color: #111; }
.p-thumb { height: 488px; }
.current { display: flex; gap: 17px; }
.preview { flex: none; width: 148px; height: 146px; background: #fff; outline: 1px solid #dcdcdc; outline-offset: -1px; }
.preview text { font: 11px "DejaVu Sans Mono", monospace; fill: #fff; text-anchor: middle; }
.preview .mid { font-size: 12px; fill: #6b8f80; }
.opts { display: flex; flex-direction: column; justify-content: space-between; align-items: flex-start; padding-bottom: 1px; }
.opts button { height: 34px; gap: 11px; white-space: nowrap; }
.opts svg { color: #404040; }
.tabs { display: flex; gap: 3px; margin: 17px 0 13px; }
.tabs button { flex-direction: column; gap: 4px; width: 66px; height: 62px; font-size: 13px; }
.tabs svg { color: #404040; }
.tabs .on { background: #dedede; }
.cards { display: grid; grid-template-columns: 133px 133px; gap: 6px; }
.card { height: 113px; background: #fff; border: 1px solid #dcdcdc; overflow: hidden; }
.card svg { flex: none; width: 133px; height: 113px; }
.card.sel { border: 3px solid #d0d0d0; }

.foot { display: flex; align-items: center; flex: none; height: 38px; padding: 0 31px 0 21px; border-top: 1px solid #dcdcdc; color: #555; }
.f-page { margin-left: 28px; gap: 63px; }
.f-page .ic { color: #667; }
.f-tab { height: 22px; margin: 0 27px 0 28px; padding-left: 17px; border-left: 1px solid #dcdcdc; font-weight: 700; color: #111; }
.zoom { display: flex; align-items: center; margin-left: auto; }
.zoom input { appearance: none; width: 112px; height: 12px; margin: 0 5px; background: linear-gradient(#b4b4b4, #b4b4b4) 0 5px / 30px 2px no-repeat, linear-gradient(#d8d8d8, #d8d8d8) 0 5px / 100% 2px no-repeat; }
.zoom input::-webkit-slider-thumb { appearance: none; width: 11px; height: 11px; border: 2px solid #aaa; border-radius: 50%; background: #fff; }
.pct { gap: 4px; margin: 0 18px 0 9px; }
</style>
